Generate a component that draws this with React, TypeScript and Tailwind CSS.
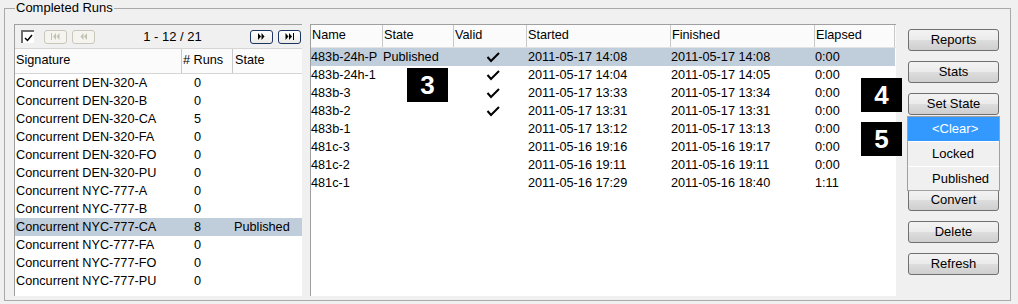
const leftRows = [
  { name: "Concurrent DEN-320-A", runs: "0", state: "" },
  { name: "Concurrent DEN-320-B", runs: "0", state: "" },
  { name: "Concurrent DEN-320-CA", runs: "5", state: "" },
  { name: "Concurrent DEN-320-FA", runs: "0", state: "" },
  { name: "Concurrent DEN-320-FO", runs: "0", state: "" },
  { name: "Concurrent DEN-320-PU", runs: "0", state: "" },
  { name: "Concurrent NYC-777-A", runs: "0", state: "" },
  { name: "Concurrent NYC-777-B", runs: "0", state: "" },
  { name: "Concurrent NYC-777-CA", runs: "8", state: "Published", selected: true },
  { name: "Concurrent NYC-777-FA", runs: "0", state: "" },
  { name: "Concurrent NYC-777-FO", runs: "0", state: "" },
  { name: "Concurrent NYC-777-PU", runs: "0", state: "" },
];

const runs = [
  { name: "483b-24h-P", state: "Published", valid: true, started: "2011-05-17 14:08", finished: "2011-05-17 14:08", elapsed: "0:00", selected: true },
  { name: "483b-24h-1", state: "", valid: true, started: "2011-05-17 14:04", finished: "2011-05-17 14:05", elapsed: "0:00" },
  { name: "483b-3", state: "", valid: true, started: "2011-05-17 13:33", finished: "2011-05-17 13:34", elapsed: "0:00" },
  { name: "483b-2", state: "", valid: true, started: "2011-05-17 13:31", finished: "2011-05-17 13:31", elapsed: "0:00" },
  { name: "483b-1", state: "", valid: false, started: "2011-05-17 13:12", finished: "2011-05-17 13:13", elapsed: "0:00" },
  { name: "481c-3", state: "", valid: false, started: "2011-05-16 19:16", finished: "2011-05-16 19:17", elapsed: "0:00" },
  { name: "481c-2", state: "", valid: false, started: "2011-05-16 19:11", finished: "2011-05-16 19:11", elapsed: "0:00" },
  { name: "481c-1", state: "", valid: false, started: "2011-05-16 17:29", finished: "2011-05-16 18:40", elapsed: "1:11" },
];

function NavIcon({ kind, color }: { kind: "first" | "prev" | "next" | "last"; color: string }) {
  return (
    <svg width="9" height="7" viewBox="0 0 9 7" fill={color}>
      {kind === "first" && (
        <>
          <rect x="0" y="0" width="1" height="7" />
          <polygon points="5,0 2,3.5 5,7" />
          <polygon points="8.5,0 5.5,3.5 8.5,7" />
        </>
      )}
      {kind === "prev" && (
        <>
          <polygon points="4.5,0 1.5,3.5 4.5,7" />
          <polygon points="8,0 5,3.5 8,7" />
        </>
      )}
      {kind === "next" && (
        <>
          <polygon points="1,0 4,3.5 1,7" />
          <polygon points="4.5,0 7.5,3.5 4.5,7" />
        </>
      )}
      {kind === "last" && (
        <>
          <polygon points="0.5,0 3.5,3.5 0.5,7" />
          <polygon points="4,0 7,3.5 4,7" />
          <rect x="8" y="0" width="1" height="7" />
        </>
      )}
    </svg>
  );
}

function NavButton({ kind, enabled }: { kind: "first" | "prev" | "next" | "last"; enabled: boolean }) {
  return (
    <div
      className={`flex h-[14px] w-[23px] items-center justify-center rounded-[3px] border ${
        enabled
          ? "border-[#1c3562] bg-[linear-gradient(#ffffff,#ecebe6)]"
          : "border-[#cac8bb] bg-[#f5f4ee]"
      }`}
    >
      <NavIcon kind={kind} color={enabled ? "#000000" : "#c3c1b4"} />
    </div>
  );
}

function Check() {
  return (
    <svg width="14" height="11" viewBox="0 0 14 11" fill="none" stroke="#000" strokeWidth="2">
      <polyline points="1.5,5 5,9 13,1" />
    </svg>
  );
}

function Button({ label, hidden }: { label: string; hidden?: boolean }) {
  return (
    <div
      className={`flex h-[22px] w-[91px] items-center justify-center rounded-[3px] border border-[#707070] bg-[linear-gradient(#f3f3f3,#ebebeb_50%,#dddddd_50%,#cfcfcf)] text-[13px] text-black ${
        hidden ? "invisible" : ""
      }`}
    >
      {label}
    </div>
  );
}

function Marker({ n, className }: { n: string; className: string }) {
  return (
    <div
      className={`absolute flex h-[34px] w-[41px] items-center justify-center bg-black text-[26px] font-bold text-white ${className}`}
    >
      {n}
    </div>
  );
}

export default function App() {
  return (
    <div className="relative h-[304px] w-[1018px] overflow-hidden bg-[#f0f0f0] pt-[8px] pl-[4px] font-['Liberation_Sans',Arial,sans-serif] text-[12.7px] text-black">
      <div className="relative h-[293px] w-[1007px] border border-[#a9a9a9]">
        <div className="absolute -top-[9px] left-[10px] bg-[#f0f0f0] px-[1px] text-[13px] leading-[16px]">
          Completed Runs
        </div>

        <div className="flex items-start pt-[15px] pl-[9px]">
          {/* signatures list */}
          <div className="flex h-[272px] w-[288px] flex-col border-t border-l border-[#a0a0a0]">
            <div className="flex h-[23px] items-center">
              <div className="ml-[6px] flex h-[13px] w-[13px] items-center justify-center border-t-2 border-l-2 border-t-[#6d6d6d] border-l-[#6d6d6d] bg-white">
                <svg width="9" height="8" viewBox="0 0 9 8" fill="none" stroke="#000" strokeWidth="1.5">
                  <polyline points="1,4 3.5,6.5 8,1" />
                </svg>
              </div>
              <div className="ml-[10px] flex gap-[5px]">
                <NavButton kind="first" enabled={false} />
                <NavButton kind="prev" enabled={false} />
              </div>
              <div className="flex-1 text-center text-[13px]">1 - 12 / 21</div>
              <div className="mr-[1px] flex gap-[5px]">
                <NavButton kind="next" enabled />
                <NavButton kind="last" enabled />
              </div>
            </div>
            <div className="flex h-[26px] border-t border-b border-[#d5d5d5] bg-[#fbfbfb]">
              <div className="flex w-[167px] items-center border-r border-[#c8c8c8] pl-[1px]">Signature</div>
              <div className="flex w-[51px] items-center border-r border-[#c8c8c8] pl-[1px]"># Runs</div>
              <div className="flex flex-1 items-center pl-[2px]">State</div>
            </div>
            <div className="flex-1 bg-white">
              {leftRows.map((r) => (
                <div
                  key={r.name}
                  className={`flex h-[18px] leading-[18px] ${r.selected ? "bg-[#c0cddb]" : ""}`}
                >
                  <div className="w-[167px] pl-[1px] whitespace-nowrap">{r.name}</div>
                  <div className="w-[51px] pl-[12px]">{r.runs}</div>
                  <div className="flex-1 pl-[1px]">{r.state}</div>
                </div>
              ))}
            </div>
          </div>

          {/* runs grid */}
          <div className="ml-[8px] flex h-[272px] w-[586px] flex-col border-t border-l border-[#a0a0a0] bg-white">
            <div className="flex h-[23px] border-b border-[#e3e3e3] bg-[#fbfbfb]">
              <div className="flex w-[72px] items-center border-r border-[#c8c8c8] pl-[1px]">Name</div>
              <div className="flex w-[71px] items-center border-r border-[#c8c8c8] pl-[1px]">State</div>
              <div className="flex w-[73px] items-center border-r border-[#c8c8c8] pl-[1px]">Valid</div>
              <div className="flex w-[144px] items-center border-r border-[#c8c8c8] pl-[1px]">Started</div>
              <div className="flex w-[144px] items-center border-r border-[#c8c8c8] pl-[1px]">Finished</div>
              <div className="flex w-[80px] items-center border-r border-[#c8c8c8] pl-[1px]">Elapsed</div>
            </div>
            {runs.map((r) => (
              <div
                key={r.name}
                className={`flex h-[18px] w-[584px] leading-[18px] ${r.selected ? "bg-[#c0cddb]" : ""}`}
              >
                <div className="w-[72px] whitespace-nowrap">{r.name}</div>
                <div className="w-[71px]">{r.state}</div>
                <div className="flex w-[73px] items-center justify-center pl-[4px]">{r.valid && <Check />}</div>
                <div className="w-[144px] pl-[1px]">{r.started}</div>
                <div className="w-[144px]">{r.finished}</div>
                <div className="w-[80px]">{r.elapsed}</div>
              </div>
            ))}
          </div>

          {/* action buttons */}
          <div className="relative ml-[12px] flex flex-col gap-[10px] pt-[5px]">
            <Button label="Reports" />
            <Button label="Stats" />
            <Button label="Set State" />
            <Button label="Lock" hidden />
            <Button label="Publish" hidden />
            <Button label="Convert" />
            <Button label="Delete" />
            <Button label="Refresh" />

            <div className="absolute top-[92px] -left-[1px] z-10 w-[93px] border border-[#a0a0a0] bg-[#f0f0f0] text-[13px]">
              <div className="flex h-[24px] items-center bg-[#3399ff] pl-[24px] text-white">&lt;Clear&gt;</div>
              <div className="flex h-[25px] items-center border-t border-white pl-[24px]">Locked</div>
              <div className="flex h-[24px] items-center border-t border-white pl-[24px]">Published</div>
            </div>
          </div>
        </div>
      </div>

      <Marker n="3" className="top-[68px] left-[407px]" />
      <Marker n="4" className="top-[78px] left-[861px]" />
      <Marker n="5" className="top-[122px] left-[861px]" />
    </div>
  );
}
